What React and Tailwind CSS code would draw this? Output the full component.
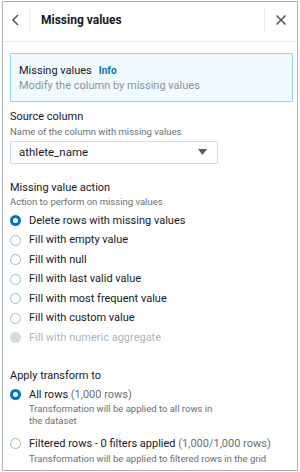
import React from 'react';

const actions = [
  { label: 'Delete rows with missing values', checked: true },
  { label: 'Fill with empty value' },
  { label: 'Fill with null' },
  { label: 'Fill with last valid value' },
  { label: 'Fill with most frequent value' },
  { label: 'Fill with custom value' },
  { label: 'Fill with numeric aggregate', disabled: true },
];

function Radio({ checked, disabled }) {
  if (checked) {
    return <div className="w-[11px] h-[11px] rounded-full border-[3.5px] border-[#0073bb] bg-white shrink-0" />;
  }
  if (disabled) {
    return <div className="w-[11px] h-[11px] rounded-full bg-[#d5dbdb] shrink-0" />;
  }
  return <div className="w-[11px] h-[11px] rounded-full border border-[#aab7b8] bg-white shrink-0" />;
}

export default function App() {
  return (
    <div className="w-[300px] h-[472px] px-[2px] py-[1px] bg-white" style={{ fontFamily: 'Roboto, "Liberation Sans", sans-serif' }}>
      <div className="h-full border border-[#aab7b8] bg-white text-[#16191f] flex flex-col overflow-hidden">
        <div className="h-[40px] shrink-0 flex items-center pb-[3px] border-b border-[#eaeded]">
          <div className="w-[26px] flex justify-center">
            <svg width="12" height="12" viewBox="0 0 12 12" fill="none" stroke="#545b64" strokeWidth="1.6">
              <path d="M8 1 L3 6 L8 11" />
            </svg>
          </div>
          <div className="w-px h-[24px] bg-[#eaeded]" />
          <div className="flex-1 pl-[11px] text-[12px] font-bold text-[#16191f]">Missing values</div>
          <div className="w-px h-[24px] bg-[#eaeded]" />
          <div className="w-[32px] flex justify-center">
            <svg width="12" height="12" viewBox="0 0 12 12" fill="none" stroke="#545b64" strokeWidth="1.6">
              <path d="M1.5 1.5 L10.5 10.5 M10.5 1.5 L1.5 10.5" />
            </svg>
          </div>
        </div>

        <div className="pl-[7px] pr-[4px] pt-[11px]">
          <div className="border border-[#8fd3f0] bg-[#f1faff] rounded-[1px] px-[8px] pt-[9px] pb-[8px]">
            <div className="flex items-baseline gap-[7px] leading-[16px]">
              <span className="text-[11px]">Missing values</span>
              <span className="text-[10px] font-bold text-[#0073bb]">Info</span>
            </div>
            <div className="text-[11px] text-[#879596] leading-[14px]">Modify the column by missing values</div>
          </div>

          <div className="mt-[7px] text-[11px] leading-[16px]">Source column</div>
          <div className="text-[9.5px] leading-[14px] text-[#687078]">Name of the column with missing values</div>
          <div className="mt-[2px] w-[208px] h-[23px] border border-[#d5dbdb] rounded-[1px] flex items-center justify-between pl-[8px] pr-[10px]">
            <span className="text-[11.5px]">athlete_name</span>
            <svg width="9" height="7" viewBox="0 0 9 7"><path d="M0 0 H9 L4.5 6 Z" fill="#545b64" /></svg>
          </div>

          <div className="mt-[16px] text-[11px] leading-[16px]">Missing value action</div>
          <div className="text-[9.5px] leading-[11px] text-[#687078]">Action to perform on missing values</div>
          <div className="mt-[4px] flex flex-col">
            {actions.map(a => (
              <div key={a.label} className="h-[19.5px] flex items-center gap-[8px]">
                <Radio checked={a.checked} disabled={a.disabled} />
                <span className={`text-[11px] ${a.disabled ? 'text-[#aab7b8]' : 'text-[#16191f]'}`}>{a.label}</span>
              </div>
            ))}
          </div>

          <div className="mt-[20px] text-[11px] leading-[16px]">Apply transform to</div>
          <div className="mt-[3px] flex gap-[8px]">
            <div className="h-[16px] flex items-center"><Radio checked /></div>
            <div>
              <div className="text-[11px] leading-[16px]">All rows <span className="text-[#687078]">(1,000 rows)</span></div>
              <div className="text-[9.5px] leading-[12px] text-[#687078] w-[192px]">Transformation will be applied to all rows in the dataset</div>
            </div>
          </div>
          <div className="mt-[9px] flex gap-[8px]">
            <div className="h-[16px] flex items-center"><Radio /></div>
            <div>
              <div className="text-[11px] leading-[16px]">Filtered rows - 0 filters applied <span className="text-[#687078]">(1,000/1,000 rows)</span></div>
              <div className="text-[9.5px] leading-[14px] text-[#687078]">Transformation will be applied to filtered rows in the grid</div>
            </div>
          </div>
        </div>
      </div>
    </div>
  );
}
